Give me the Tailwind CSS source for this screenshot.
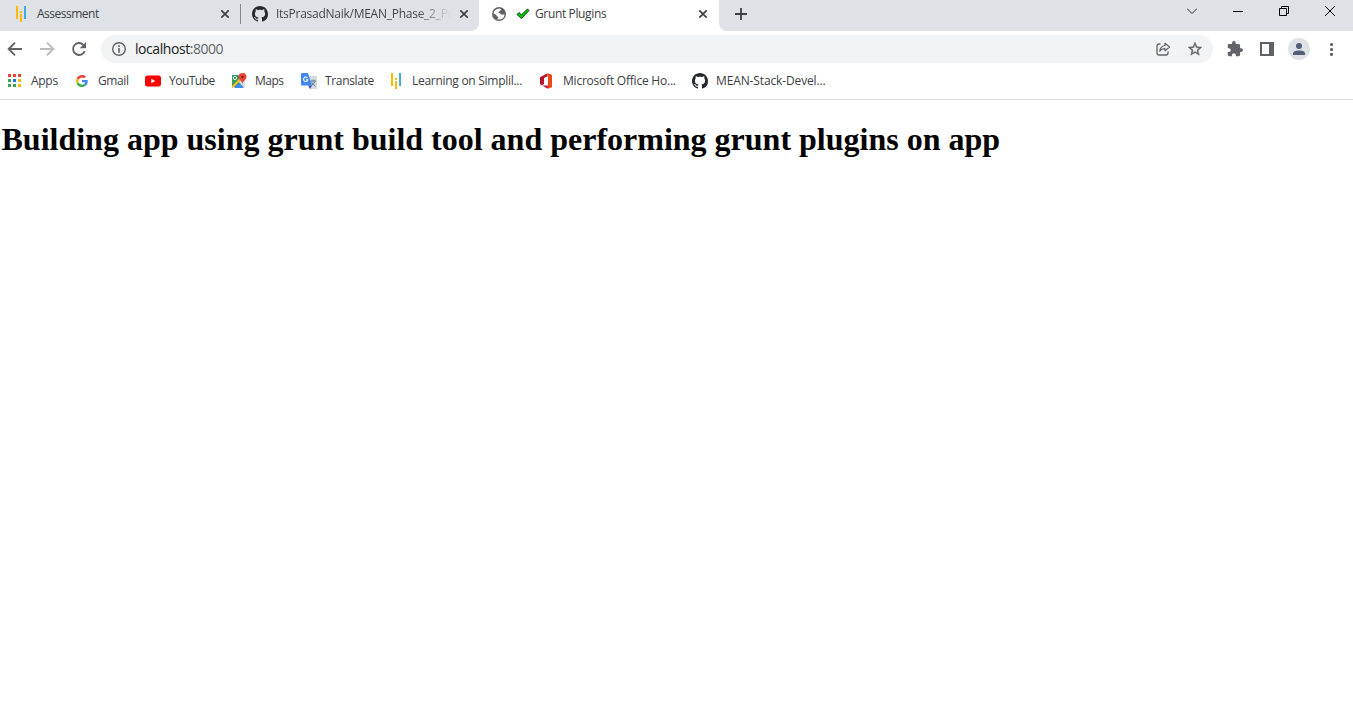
<!DOCTYPE html>
<html lang="en">
<head>
<meta charset="utf-8">
<title>Grunt Plugins</title>
<script src="https://cdn.jsdelivr.net/npm/@tailwindcss/browser@4"></script>
</head>
<body class="h-[718px] w-[1353px] overflow-hidden bg-white font-['Open_Sans',sans-serif] text-[12px] text-[#3c4043]">
<svg class="hidden">
  <symbol id="github" viewBox="0 0 16 16"><path fill="#24292f" fill-rule="evenodd" d="M8 0C3.58 0 0 3.58 0 8c0 3.54 2.29 6.53 5.47 7.59.4.07.55-.17.55-.38 0-.19-.01-.82-.01-1.49-2.01.37-2.53-.49-2.69-.94-.09-.23-.48-.94-.82-1.13-.28-.15-.68-.52-.01-.53.63-.01 1.08.58 1.23.82.72 1.21 1.87.87 2.33.66.07-.52.28-.87.51-1.07-1.78-.2-3.64-.89-3.64-3.95 0-.87.31-1.59.82-2.15-.08-.2-.36-1.02.08-2.12 0 0 .67-.21 2.2.82.64-.18 1.32-.27 2-.27s1.36.09 2 .27c1.53-1.04 2.2-.82 2.2-.82.44 1.1.16 1.92.08 2.12.51.56.82 1.27.82 2.15 0 3.07-1.87 3.75-3.65 3.95.29.25.54.73.54 1.48 0 1.07-.01 1.93-.01 2.2 0 .21.15.46.55.38A8.01 8.01 0 0 0 16 8c0-4.42-3.58-8-8-8Z"/></symbol>
  <symbol id="simpli" viewBox="0 0 16 16"><path fill="#ffba00" d="M3 0h2v13H3zM7 5h2v2H7zM7 8h2v8H7z"/><path fill="#43a9df" d="M11 0h2v13h-2z"/></symbol>
  <symbol id="close" viewBox="0 0 10 10"><path d="M1.3 1.3l7.4 7.4M8.7 1.3L1.3 8.7" stroke="#3c4043" stroke-width="1.7"/></symbol>
</svg>

<div class="flex h-[31px]">
  <div class="flex w-[479px] rounded-br-lg bg-[#dee1e6] pb-[3px]">
    <div class="flex w-[240px] items-center pl-[13px]">
      <svg class="size-4 shrink-0"><use href="#simpli"/></svg>
      <span class="ml-2 w-[183px] text-[12px] leading-4 tracking-[-0.5px]">Assessment</span>
      <svg class="size-[10px] shrink-0"><use href="#close"/></svg>
    </div>
    <div class="mt-1 h-5 w-px bg-[#80868b]"></div>
    <div class="flex flex-1 items-center pl-[11px]">
      <svg class="size-4 shrink-0"><use href="#github"/></svg>
      <span class="ml-2 w-[175px] bg-linear-to-r from-[#3c4043] from-80% to-transparent bg-clip-text text-[12px] leading-4 tracking-[-0.26px] whitespace-nowrap text-transparent">ItsPrasadNaik/MEAN_Phase_2_Pro</span>
      <svg class="ml-2 size-[10px] shrink-0"><use href="#close"/></svg>
    </div>
  </div>
  <div class="flex w-[240px] items-center bg-white pb-[3px] pl-[13px]">
    <svg class="size-[14px] shrink-0" viewBox="0 0 14 14"><circle cx="7" cy="7" r="7" fill="#5f6368"/><path d="M7.500 1.600Q9.300 1.800 9.300 3L7.300 4 7 5.200 5.700 6 8 6.300 9 7.600 12.500 7.400Q12.300 11.600 7.800 12.500L4.800 12.200 6.300 11 6.200 9.700 4.700 9.200 4.300 7.700 1.500 6.600Q2 2 7.500 1.600Z" fill="#fff"/></svg>
    <svg class="ml-[10px] h-3 w-[14px] shrink-0" viewBox="0 0 14 12"><path d="M1 6.500L3 4.500l2.500 2.300L11.500 1 13 2.500 5.500 10.500Z" fill="#0c0" stroke="#064006"/></svg>
    <span class="ml-[5px] w-[163px] text-[12px] leading-4 tracking-[-0.36px]">Grunt Plugins</span>
    <svg class="size-[10px] shrink-0"><use href="#close"/></svg>
  </div>
  <div class="flex flex-1 justify-between rounded-bl-lg bg-[#dee1e6] pl-4">
    <svg class="mt-2 size-3" viewBox="0 0 12 12"><path d="M6 0v12M0 6h12" stroke="#3c4043" stroke-width="1.8"/></svg>
    <div class="flex gap-9 pt-[6px] pr-[18px]">
      <svg class="size-[10px]" viewBox="0 0 10 10"><path d="M0 2.500l5 5 5-5" fill="none" stroke="#202124"/></svg>
      <svg class="size-[10px]" viewBox="0 0 10 10"><path d="M0 5.500h10" stroke="#000"/></svg>
      <svg class="size-[10px]" viewBox="0 0 10 10"><path d="M.5 2.500h7v7h-7zM2.500 2.500v-2h7v7h-2" fill="none" stroke="#000"/></svg>
      <svg class="size-[10px]" viewBox="0 0 10 10"><path d="M0 0l10 10M10 0L0 10" stroke="#000"/></svg>
    </div>
  </div>
</div>

<div class="flex h-9 items-center pl-[7px]">
  <svg class="size-4" viewBox="0 0 16 16"><path d="M15 8H2M8 1.700L1.700 8 8 14.300" fill="none" stroke="#5f6368" stroke-width="1.900"/></svg>
  <svg class="ml-4 size-4" viewBox="0 0 16 16"><path d="M1 8h13M8 1.700L14.300 8 8 14.300" fill="none" stroke="#babcbe" stroke-width="1.900"/></svg>
  <svg class="ml-4 size-4" viewBox="0 0 16 16"><path d="M13.700 10A6 6 0 1 1 12.400 3.800L14 5.400" fill="none" stroke="#5f6368" stroke-width="1.900"/><path d="M15 1v6.300H8.700Z" fill="#5f6368"/></svg>
  <div class="ml-[14px] flex h-7 w-[1112px] items-center rounded-full bg-[#f1f3f4] pl-[11px]">
    <svg class="size-[14px]" viewBox="0 0 14 14"><circle cx="7" cy="7" r="6.300" fill="none" stroke="#5f6368" stroke-width="1.400"/><path d="M6.200 3.300h1.600v1.600H6.200zM6.200 6h1.600v4.700H6.200z" fill="#5f6368"/></svg>
    <span class="ml-[9px] text-[14px] leading-5 tracking-[-0.44px] text-[#202124]">localhost<span class="text-[#5f6368]">:8000</span></span>
    <svg class="ml-auto h-[14px] w-[15px]" viewBox="0 0 15 14"><path d="M4.500 2H3Q1 2 1 4v7q0 2 2 2h7q2 0 2-2V9.500" fill="none" stroke="#5f6368" stroke-width="1.300"/><path d="M9 1.200L13.600 5 9 8.800V6.600Q5.500 6.600 3.700 9.200 4.200 4.300 9 3.500Z" fill="none" stroke="#5f6368" stroke-width="1.200" stroke-linejoin="round"/></svg>
    <svg class="mr-[11px] ml-[17px] size-[14px]" viewBox="2 2 20 20"><path d="M22 9.240l-7.190-.620L12 2 9.190 8.630 2 9.240l5.460 4.730L5.820 21 12 17.270 18.180 21l-1.630-7.030L22 9.240zM12 15.400l-3.760 2.270 1-4.280-3.320-2.880 4.380-.380L12 6.100l1.710 4.040 4.380.380-3.320 2.880 1 4.280L12 15.400z" fill="#5f6368" stroke="#5f6368" stroke-width=".5"/></svg>
  </div>
  <svg class="ml-[14px] size-4" viewBox="1 1 22 22"><path d="M20.500 11H19V7c0-1.100-.900-2-2-2h-4V3.500a2.500 2.500 0 0 0-5 0V5H4c-1.100 0-1.990.900-1.990 2v3.800H3.500a2.700 2.700 0 0 1 0 5.400H2V20c0 1.100.900 2 2 2h3.800v-1.500a2.700 2.700 0 0 1 5.400 0V22H17c1.100 0 2-.900 2-2v-4h1.500a2.500 2.500 0 0 0 0-5z" fill="#5f6368"/></svg>
  <svg class="ml-[17px] h-[14px] w-[14px]" viewBox="0 0 14 14"><path fill="#5f6368" fill-rule="evenodd" d="M0 0h14v14H0zM2 2v10h7V2z"/></svg>
  <svg class="ml-[14px] size-[22px]" viewBox="0 0 22 22"><circle cx="11" cy="11" r="11" fill="#dee1e6"/><circle cx="11" cy="8" r="3" fill="#535e78"/><path d="M5 17v-1.500Q5 12.500 11 12.500T17 15.500V17Z" fill="#535e78"/></svg>
  <svg class="ml-[19px] h-[14px] w-1" viewBox="0 0 4 14"><g fill="#5f6368"><circle cx="2.500" cy="2.500" r="1.600"/><circle cx="2.500" cy="7.500" r="1.600"/><circle cx="2.500" cy="12.400" r="1.600"/></g></svg>
</div>

<div class="flex h-[33px] border-b border-[#dadce0] pb-1 pl-[7px] leading-4 tracking-[-0.28px] whitespace-nowrap">
  <div class="flex w-[67px] items-center gap-2">
    <svg class="size-4" viewBox="0 0 16 16"><path fill="#ea4335" d="M1 1h3v3H1zM6 1h3v3H6zM11 1h3v3h-3z"/><path fill="#34a853" d="M1 6h3v3H1zM1 11h3v3H1zM6 11h3v3H6z"/><path fill="#1a73e8" d="M6 6h3v3H6z"/><path fill="#fbbc04" d="M11 6h3v3h-3zM11 11h3v3h-3z"/></svg>
    <span>Apps</span>
  </div>
  <div class="flex w-[71px] items-center gap-2">
    <svg class="size-4 p-[2px]" viewBox="0 0 48 48"><path fill="#ea4335" d="M24 9.500c3.540 0 6.710 1.220 9.210 3.600l6.850-6.850C35.900 2.380 30.470 0 24 0 14.620 0 6.510 5.380 2.560 13.220l7.980 6.190C12.430 13.720 17.740 9.500 24 9.500z"/><path fill="#4285f4" d="M46.980 24.550c0-1.570-.150-3.090-.380-4.550H24v9.020h12.940c-.580 2.960-2.260 5.480-4.780 7.180l7.730 6c4.510-4.180 7.090-10.360 7.090-17.650z"/><path fill="#fbbc05" d="M10.530 28.590a14.500 14.500 0 0 1 0-9.180l-7.980-6.190a24 24 0 0 0 0 21.560l7.980-6.190z"/><path fill="#34a853" d="M24 48c6.480 0 11.930-2.130 15.890-5.810l-7.730-6c-2.150 1.450-4.920 2.300-8.160 2.300-6.260 0-11.570-4.220-13.470-9.910l-7.980 6.190C6.510 42.620 14.620 48 24 48z"/></svg>
    <span class="tracking-[-0.4px]">Gmail</span>
  </div>
  <div class="flex w-[86px] items-center gap-2">
    <svg class="size-4" viewBox="0 0 16 16"><rect y="2.500" width="16" height="11" rx="2.500" fill="#f00"/><path d="M6.300 5.700v4.600l4-2.300z" fill="#fff"/></svg>
    <span class="tracking-[-0.52px]">YouTube</span>
  </div>
  <div class="flex w-[70px] items-center gap-2">
    <svg class="size-4" viewBox="0 0 16 16"><path fill="#34a05a" d="M1 2h12v12H1z"/><path fill="#d9dde1" d="M7 8l7-4v10l-1 1z"/><path fill="#fbc02d" d="M1 13L10 4l1.500 1.500L2 15H1z"/><path fill="#4285f4" d="M3 15l5-5 5 5z"/><circle cx="4" cy="5" r="1.600" fill="none" stroke="#fff"/><path fill="#ea4335" d="M11.500 0A4 4 0 0 0 7.600 4c0 2.700 3.300 3.500 3.900 7 .600-3.500 4-4.300 4-7a4 4 0 0 0-4-4z"/><circle cx="11.500" cy="4" r="1.300" fill="#8c1d18"/></svg>
    <span class="tracking-[-0.5px]">Maps</span>
  </div>
  <div class="flex w-[87px] items-center gap-2">
    <svg class="size-4" viewBox="0 0 16 16"><path fill="#d5d8dc" d="M6 3h9q1 0 1 1v11q0 1-1 1H9z"/><path d="M9.500 8H15M12.300 6.500V8M14 8q-1 3-3.500 4.500M10.500 9q1.500 3 4 4" stroke="#607d8b" fill="none"/><path fill="#4285f4" d="M1 0h6l4 12.500H1q-1 0-1-1V1q0-1 1-1z"/><path fill="#2a56c6" d="M7 12.500h4L9 16z"/><path d="M6.400 4.800a2.200 2.200 0 1 0 .5 2H4.800" fill="none" stroke="#fff" stroke-width="1.100"/></svg>
    <span class="tracking-[-0.34px]">Translate</span>
  </div>
  <div class="flex w-[151px] items-center gap-2">
    <svg class="size-4"><use href="#simpli"/></svg>
    <span>Learning on Simplil...</span>
  </div>
  <div class="flex w-[153px] items-center gap-2">
    <svg class="size-4" viewBox="0 0 16 16"><path fill="#b7142b" d="M1 4.300L8.500.300 8 3.600 5 4.900V11L3 12.300 1 11.300z"/><path fill="#e64a19" d="M8.500.300L13 1.800V14.200L8.500 15.700 8 13H9V3.500L8 3.600z"/><path fill="#d0173c" d="M3 12.300L5 12.500h4v1L8.500 15.700z"/></svg>
    <span class="tracking-[-0.22px]">Microsoft Office Ho...</span>
  </div>
  <div class="flex items-center gap-2">
    <svg class="size-4"><use href="#github"/></svg>
    <span class="tracking-[-0.13px]">MEAN-Stack-Devel...</span>
  </div>
</div>

<h1 class="mt-[21px] pl-[1.5px] font-['Liberation_Serif',serif] text-[32px] leading-[37px] font-bold whitespace-nowrap text-black">Building app using grunt build tool and performing grunt plugins on app</h1>
</body>
</html>
